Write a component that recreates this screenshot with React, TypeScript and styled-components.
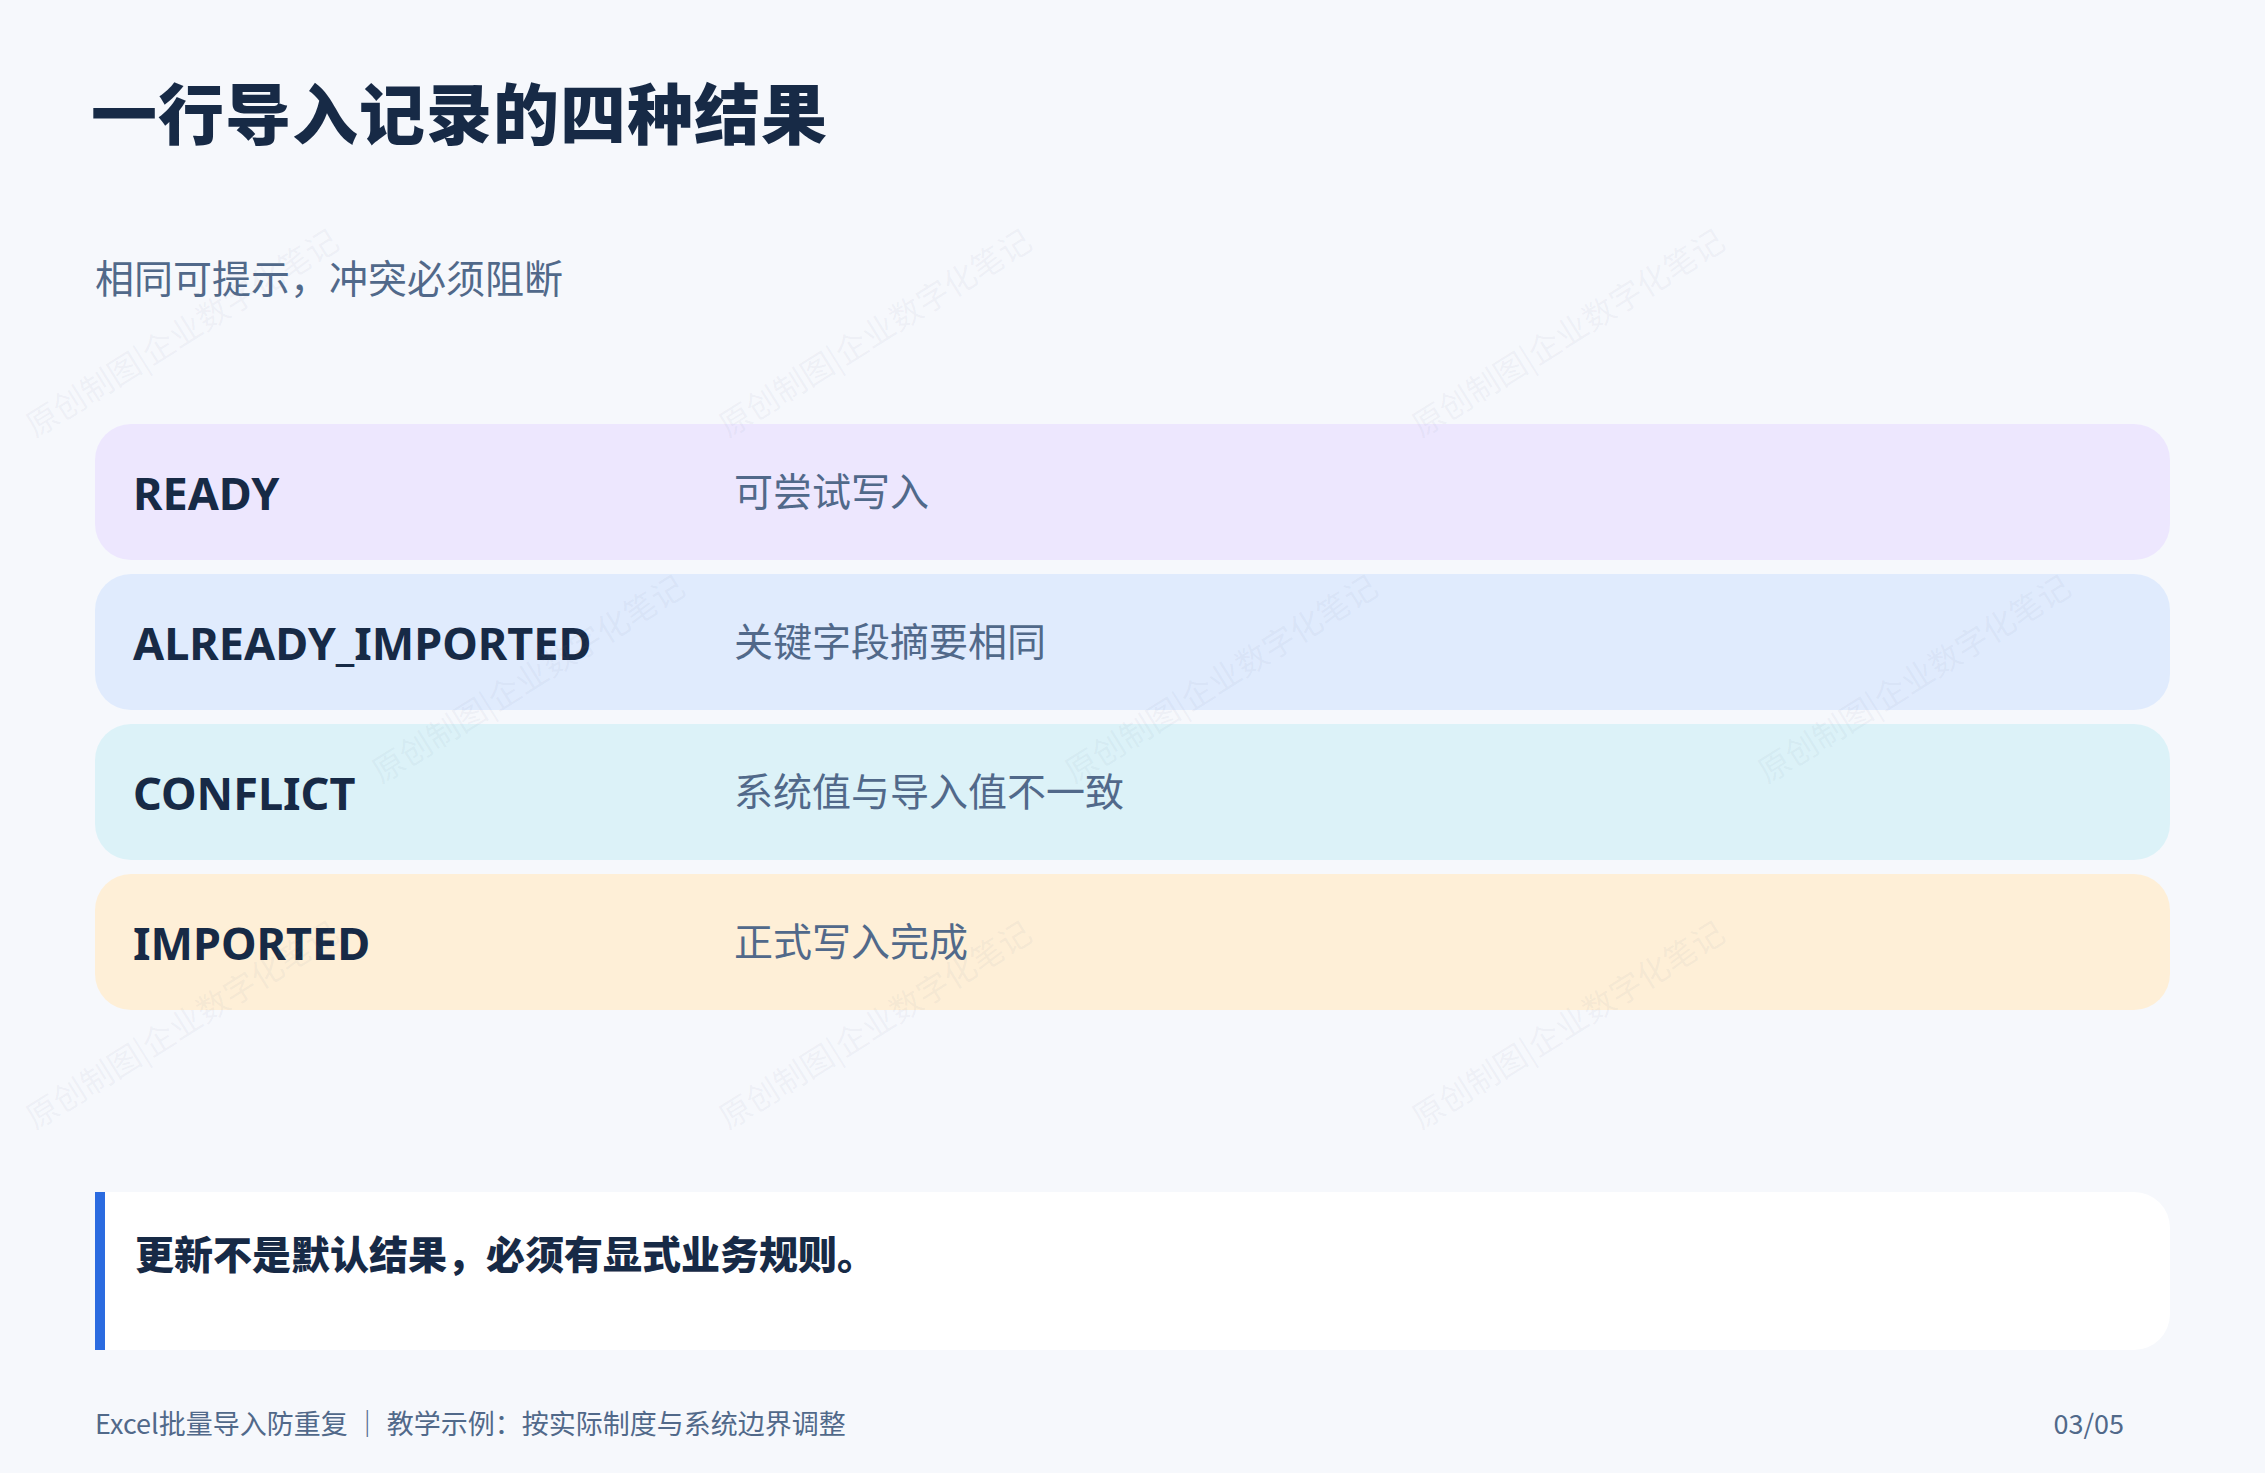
import React from "react";
import styled, { createGlobalStyle } from "styled-components";

const Global = createGlobalStyle`
  html, body { margin: 0; padding: 0; background: #f6f8fc; }
  body { font-family: "Noto Sans", "Noto Sans CJK SC", sans-serif; }
`;

const Page = styled.div`
  position: relative;
  width: 2265px;
  height: 1473px;
  overflow: hidden;
  background: #f6f8fc;
  box-sizing: border-box;
  padding: 68px 95px 0 95px;
  display: flex;
  flex-direction: column;
`;

const Title = styled.h1`
  margin: 0 0 0 -4px;
  font-size: 66px;
  font-weight: 900;
  color: #172a46;
  line-height: 1.3;
  letter-spacing: 1px;
  font-family: "Noto Sans CJK SC", sans-serif;
`;

const Subtitle = styled.div`
  margin-top: 97px;
  font-size: 39px;
  color: #51698a;
  font-family: "Noto Sans CJK SC", sans-serif;
  line-height: 1.3;
`;

const Rows = styled.div`
  margin-top: 123px;
  display: flex;
  flex-direction: column;
  gap: 14px;
`;

const Row = styled.div<{ $bg: string }>`
  height: 136px;
  border-radius: 36px;
  background: ${(p) => p.$bg};
  display: grid;
  grid-template-columns: 601px 1fr;
  align-items: center;
  padding-left: 38px;
`;

const Label = styled.div`
  font-family: "Noto Sans", sans-serif;
  font-weight: 700;
  font-size: 45px;
  color: #172a46;
`;

const Desc = styled.div`
  font-family: "Noto Sans CJK SC", sans-serif;
  font-size: 39px;
  color: #51698a;
  margin-top: -6px;
`;

const Callout = styled.div`
  margin-top: 182px;
  height: 158px;
  box-sizing: border-box;
  background: #fff;
  border-left: 10px solid #2b6be0;
  border-radius: 0 36px 36px 0;
  padding: 32px 0 0 30px;
  font-family: "Noto Sans CJK SC", sans-serif;
  font-weight: 900;
  font-size: 39px;
  color: #172a46;
`;

const Footer = styled.div`
  margin-top: 53px;
  display: flex;
  justify-content: space-between;
  padding-right: 46px;
  font-family: "Noto Sans CJK SC", sans-serif;
  font-size: 27px;
  color: #51698a;
`;

const Marks = styled.div`
  position: absolute;
  inset: 0;
  pointer-events: none;
`;

const Mark = styled.div`
  position: absolute;
  transform: rotate(-32deg);
  transform-origin: left bottom;
  font-family: "Noto Sans CJK SC", sans-serif;
  font-size: 32px;
  color: rgba(120, 135, 160, 0.07);
  white-space: nowrap;
`;

const rows = [
  { k: "READY", v: "可尝试写入", bg: "#ede7fe" },
  { k: "ALREADY_IMPORTED", v: "关键字段摘要相同", bg: "#e0ebfd" },
  { k: "CONFLICT", v: "系统值与导入值不一致", bg: "#dcf2f8" },
  { k: "IMPORTED", v: "正式写入完成", bg: "#feefd7" },
];

const marks: [number, number][] = [];
for (let r = 0; r < 3; r++) {
  for (let c = 0; c < 4; c++) {
    const x = 40 + c * 693 + (r % 2 ? 346 : 0);
    const y = 440 + r * 346;
    if (x < 1800) marks.push([x, y]);
  }
}

export default function App() {
  return (
    <>
      <Global />
      <Page>
        <Title>一行导入记录的四种结果</Title>
        <Subtitle>相同可提示，冲突必须阻断</Subtitle>
        <Rows>
          {rows.map((r) => (
            <Row key={r.k} $bg={r.bg}>
              <Label>{r.k}</Label>
              <Desc>{r.v}</Desc>
            </Row>
          ))}
        </Rows>
        <Callout>更新不是默认结果，必须有显式业务规则。</Callout>
        <Footer>
          <span>Excel批量导入防重复 ｜ 教学示例：按实际制度与系统边界调整</span>
          <span>03/05</span>
        </Footer>
        <Marks>
          {marks.map(([x, y], i) => (
            <Mark key={i} style={{ left: x, top: y - 40 }}>
              原创制图|企业数字化笔记
            </Mark>
          ))}
        </Marks>
      </Page>
    </>
  );
}
